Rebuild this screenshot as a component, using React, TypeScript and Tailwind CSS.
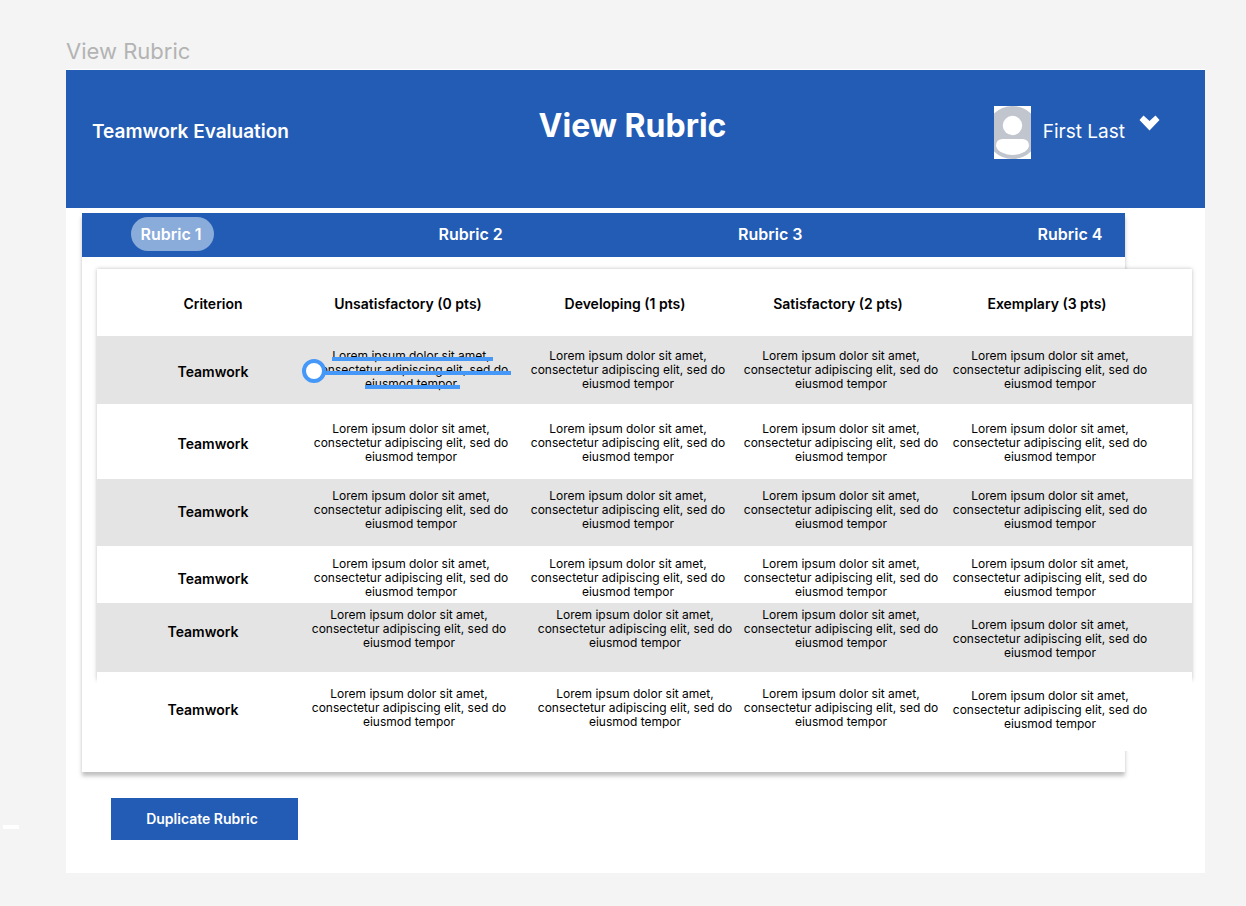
const lines = ["Lorem ipsum dolor sit amet,", "consectetur adipiscing elit, sed do", "eiusmod tempor"];

const columns = ["Criterion", "Unsatisfactory (0 pts)", "Developing (1 pts)", "Satisfactory (2 pts)", "Exemplary (3 pts)"];

const tabs = ["Rubric 1", "Rubric 2", "Rubric 3", "Rubric 4"];

type Row = {
  row: string;
  name: string;
  cells: string[];
  struck?: boolean;
};

const rows: Row[] = [
  { row: "h-[68px] bg-[#e4e4e4]", name: "pl-6 pt-[26px]", cells: ["pt-[13px]", "pt-[13px]", "pt-[13px]", "pt-[13px] pr-[35px]"], struck: true },
  { row: "h-[75px] bg-white", name: "pl-6 pt-[30px]", cells: ["pt-[18px]", "pt-[18px]", "pt-[18px]", "pt-[18px] pr-[35px]"] },
  { row: "h-[67px] bg-[#e4e4e4]", name: "pl-6 pt-[23px]", cells: ["pt-[10px]", "pt-[10px]", "pt-[10px]", "pt-[10px] pr-[35px]"] },
  { row: "h-[57px] bg-white", name: "pl-6 pt-[23px]", cells: ["pt-[11px]", "pt-[11px]", "pt-[11px]", "pt-[11px] pr-[35px]"] },
  { row: "h-[69px] bg-[#e4e4e4]", name: "pl-1 pt-[19px]", cells: ["pt-[5px] pr-1", "pt-[5px] pl-[14px]", "pt-[5px]", "pt-[15px] pr-[35px]"] },
  { row: "h-[79px] bg-white", name: "pl-1 pt-7", cells: ["pt-[15px] pr-1", "pt-[15px] pl-[14px]", "pt-[15px]", "pt-[17px] pr-[35px]"] },
];

function Description({ struck }: { struck?: boolean }) {
  return (
    <div className="relative text-xs leading-[14px] whitespace-nowrap">
      {lines.map((line) => (
        <div key={line}>
          <span className="relative inline-block">
            {line}
            {struck && <span className="absolute left-0 -right-[3px] top-2 h-1 bg-[#4598f7]" />}
          </span>
        </div>
      ))}
      {struck && <span className="absolute -left-[3px] top-[10px] size-6 rounded-full border-4 border-[#4598f7] bg-white" />}
    </div>
  );
}

function Avatar() {
  return (
    <svg viewBox="0 0 37 53" className="h-[53px] w-[37px]" aria-hidden="true">
      <rect width="37" height="53" fill="#fff" />
      <circle cx="18.5" cy="26.5" r="26.5" fill="#c1c5ce" />
      <circle cx="18.5" cy="19.5" r="9.7" fill="#fff" />
      <path d="M8 33H29Q35 33.500 35 40Q34 44 29 46.500Q18.500 51.500 8 46.500Q3 44 2 40Q2 33.500 8 33Z" fill="#fff" />
    </svg>
  );
}

export default function App() {
  return (
    <div className="relative min-h-screen bg-[#f4f4f4] pt-[38px] pr-[41px] pb-8 pl-[66px] font-['Inter',sans-serif]">
      <p className="text-[22px] leading-[26px] text-[#b3b3b3]">View Rubric</p>
      <span className="absolute left-[3px] top-[825px] h-1 w-4 bg-white" />

      <main className="mt-[5px] border-t border-white bg-white pb-[33px]">
        <header className="grid h-[138px] grid-cols-3 items-start bg-[#235cb5] text-white">
          <p className="mt-[50px] pl-[26px] text-[19px] leading-6 font-semibold">Teamwork Evaluation</p>
          <h1 className="mt-9 pr-[6px] text-center text-[32px] leading-10 font-bold">View Rubric</h1>
          <div className="mt-9 flex justify-end pr-[45px]">
            <Avatar />
            <span className="mt-[14px] ml-3 text-[19px] leading-6">First Last</span>
            <button type="button" aria-label="Open account menu" className="mt-[9px] ml-[14px] self-start">
              <svg viewBox="0 0 21 16" className="h-4 w-[21px]" fill="#fff" aria-hidden="true">
                <path d="M0.500 5L4.500 0.500L10.500 6L16.500 0.500L20.500 5L10.500 15.500Z" />
              </svg>
            </button>
          </div>
        </header>

        <section className="mt-[5px] mr-20 ml-4 bg-white pb-[21px] shadow-[0_4px_4px_rgba(0,0,0,0.25)]">
          <nav className="flex h-11 items-center justify-between bg-[#235cb5] pr-3 pb-[2px] pl-[49px]">
            {tabs.map((tab, i) => (
              <button
                key={tab}
                type="button"
                className={
                  i === 0
                    ? "h-[34px] w-[83px] rounded-full bg-[#8aacda] pr-[3px] pb-[1px] text-base font-semibold text-white"
                    : "h-[34px] w-[83px] rounded-full pr-[3px] pb-[1px] text-base font-semibold text-white"
                }
              >
                {tab}
              </button>
            ))}
          </nav>

          <div className="relative mt-3 -mr-[67px] ml-[15px]">
            <div className="absolute inset-x-0 top-0 bottom-[71px] bg-white shadow-[0_0_4px_rgba(0,0,0,0.25)]" />
            <table className="relative w-full table-fixed border-collapse bg-white text-center text-black">
              <colgroup>
                <col className="w-[208px]" />
                <col className="w-[212px]" />
                <col className="w-[222px]" />
                <col className="w-[204px]" />
                <col className="w-[249px]" />
              </colgroup>
              <thead>
                <tr className="h-[67px] text-sm leading-5">
                  {columns.map((column, i) => (
                    <th
                      key={column}
                      scope="col"
                      className={i === 0 ? "p-0 pt-[2px] pl-6 font-semibold" : i === 4 ? "p-0 pt-[2px] pr-[41px] font-semibold" : "p-0 pt-[2px] pr-[6px] font-semibold"}
                    >
                      {column}
                    </th>
                  ))}
                </tr>
              </thead>
              <tbody>
                {rows.map((r, i) => (
                  <tr key={i} className={r.row}>
                    <th scope="row" className={`align-top text-sm leading-5 font-semibold ${r.name}`}>
                      Teamwork
                    </th>
                    {r.cells.map((cell, j) => (
                      <td key={j} className={`align-top ${cell}`}>
                        <Description struck={r.struck && j === 0} />
                      </td>
                    ))}
                  </tr>
                ))}
              </tbody>
            </table>
          </div>
        </section>

        <button type="button" className="mt-[26px] ml-[45px] h-[42px] w-[187px] bg-[#235cb5] pr-[5px] text-sm font-semibold text-white">
          Duplicate Rubric
        </button>
      </main>
    </div>
  );
}
